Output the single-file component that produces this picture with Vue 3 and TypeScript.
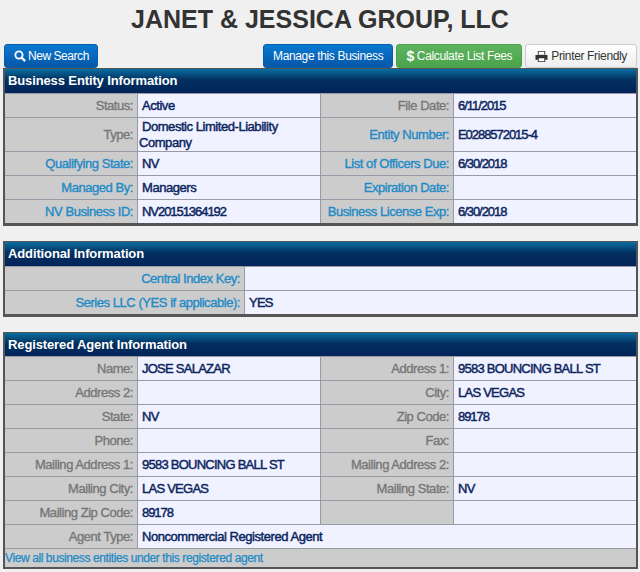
<template>
  <div class="page">
    <h1 class="title">JANET &amp; JESSICA GROUP, LLC</h1>

    <div class="actions">
      <a class="btn blue search">
        <svg class="ico" viewBox="0 0 14 14" width="12" height="12"><circle cx="5.8" cy="5.800" r="4.2" fill="none" stroke="currentColor" stroke-width="2.200" /><path d="M9 9l4 4" stroke="currentColor" stroke-width="2.600" /></svg>
        New Search
      </a>
      <div class="spacer"></div>
      <a class="btn blue">Manage this Business</a>
      <a class="btn green"><span class="dollar">$</span> Calculate List Fees</a>
      <a class="btn white">
        <svg class="ico" viewBox="0 0 14 14" width="13" height="13"><path d="M3 1h8v4H3zM0.500 5.500h13v5H11V13H3v-2.500H0.500z" fill="currentColor" /><path d="M4 2h6v3H4zM4 9h6v3H4z" fill="#fff" /></svg>
        Printer Friendly
      </a>
    </div>

    <section v-for="p in panels" :key="p.title" class="panel" :class="p.cls">
      <div class="panel-head">{{ p.title }}</div>
      <div class="grid">
        <template v-for="c in p.cells" :key="c.label">
          <div class="lbl" :class="[{ link: c.link }, c.rowCls]">{{ c.label }}</div>
          <div class="val" :class="[valueClass(c.value), { wide: c.wide, indent: c.indent }, c.rowCls]">{{ c.value }}</div>
        </template>
      </div>
      <div v-if="p.foot" class="foot">{{ p.foot }}</div>
    </section>
  </div>
</template>

<script setup lang="ts">
interface Cell {
  label: string;
  value: string;
  link?: boolean;
  wide?: boolean;
  indent?: boolean;
  rowCls?: string;
}

interface Panel {
  title: string;
  cls: string;
  cells: Cell[];
  foot?: string;
}

// ids and dates sit tighter than names, all caps in between
const valueClass = (value: string) => {
  if (/^[A-Z]*[\d/-]+$/.test(value) || /^[A-Z]+\d/.test(value)) return "numeric";
  if (!/[a-z]/.test(value)) return "caps";
  return "";
};

const panels: Panel[] = [
  {
    title: "Business Entity Information",
    cls: "four",
    cells: [
      { label: "Status:", value: "Active" },
      { label: "File Date:", value: "6/11/2015" },
      { label: "Type:", value: "Domestic Limited-Liability Company", rowCls: "tall", indent: true },
      { label: "Entity Number:", value: "E0288572015-4", link: true, rowCls: "tall" },
      { label: "Qualifying State:", value: "NV", link: true },
      { label: "List of Officers Due:", value: "6/30/2018", link: true },
      { label: "Managed By:", value: "Managers", link: true },
      { label: "Expiration Date:", value: "", link: true },
      { label: "NV Business ID:", value: "NV20151364192", link: true },
      { label: "Business License Exp:", value: "6/30/2018", link: true },
    ],
  },
  {
    title: "Additional Information",
    cls: "two",
    cells: [
      { label: "Central Index Key:", value: "", link: true },
      { label: "Series LLC (YES if applicable):", value: "YES", link: true },
    ],
  },
  {
    title: "Registered Agent Information",
    cls: "four agent",
    cells: [
      { label: "Name:", value: "JOSE SALAZAR" },
      { label: "Address 1:", value: "9583 BOUNCING BALL ST" },
      { label: "Address 2:", value: "" },
      { label: "City:", value: "LAS VEGAS" },
      { label: "State:", value: "NV" },
      { label: "Zip Code:", value: "89178" },
      { label: "Phone:", value: "" },
      { label: "Fax:", value: "" },
      { label: "Mailing Address 1:", value: "9583 BOUNCING BALL ST" },
      { label: "Mailing Address 2:", value: "" },
      { label: "Mailing City:", value: "LAS VEGAS" },
      { label: "Mailing State:", value: "NV" },
      { label: "Mailing Zip Code:", value: "89178" },
      { label: " ", value: "" },
      { label: "Agent Type:", value: "Noncommercial Registered Agent", wide: true },
    ],
    foot: "View all business entities under this registered agent",
  },
];
</script>

<style>
html,
body {
  margin: 0;
  background: #f0f0f0;
}
</style>

<style scoped>
.page {
  width: 640px;
  height: 572px;
  overflow: hidden;
  box-sizing: border-box;
  padding: 0 3px;
  font-family: "Liberation Sans", Arial, sans-serif;
  background: #f0f0f0;
}

.title {
  margin: 0;
  height: 44px;
  padding-top: 3px;
  box-sizing: border-box;
  font-size: 25px;
  line-height: 32px;
  font-weight: bold;
  text-align: center;
  color: #333;
}

.actions {
  display: flex;
  gap: 3px;
  height: 24px;
  padding-left: 1px;
}

.spacer {
  flex: 1;
}

.btn {
  display: flex;
  align-items: center;
  gap: 3px;
  box-sizing: border-box;
  height: 24px;
  padding: 0 9px;
  border-radius: 3px;
  font-size: 12px;
  letter-spacing: -0.35px;
  color: #fff;
}

.search {
  gap: 2px;
  letter-spacing: -0.45px;
  padding-right: 8px;
}

.ico {
  flex: none;
}

.blue {
  background: linear-gradient(#0a7ad0, #0556a8);
  border: 1px solid #0a5cab;
}

.green {
  background: linear-gradient(#5fb45f, #4aa34a);
  border: 1px solid #4a9f4a;
}

.white {
  background: linear-gradient(#fff, #eee);
  border: 1px solid #ccc;
  color: #333;
}

.dollar {
  font-weight: bold;
  font-size: 14px;
}

.panel {
  border: 2px solid #555;
  border-top-width: 1px;
  border-bottom-width: 3px;
  background: #fff;
  margin-bottom: 15px;
  margin-right: -1px;
}

.panel.agent {
  border-bottom-width: 2px;
}

.panel-head {
  height: 24px;
  line-height: 23px;
  padding-left: 3px;
  font-size: 13px;
  letter-spacing: -0.12px;
  font-weight: bold;
  color: #fff;
  background: linear-gradient(#086ea0, #03305f 45%, #02245a);
}

.agent .panel-head {
  height: 23px;
}

.grid {
  display: grid;
  background: #9a9aa6;
  gap: 1px;
  padding-top: 1px;
}

.four .grid {
  grid-template-columns: 132px 182px 132px 1fr;
}

.two .grid {
  grid-template-columns: 239px 1fr;
}

.lbl,
.val {
  display: flex;
  align-items: center;
  min-height: 23px;
  box-sizing: border-box;
  font-size: 13px;
  letter-spacing: -0.45px;
  line-height: 16px;
}

.lbl {
  justify-content: flex-end;
  padding-right: 4px;
  background: #ccc;
  color: #777;
  -webkit-text-stroke: 0.35px currentColor;
}

.lbl.link {
  color: #1e8ac6;
}

.val {
  padding-left: 4px;
  background: #f1f2ff;
  color: #0b2560;
  -webkit-text-stroke: 0.45px currentColor;
}

.val.caps {
  letter-spacing: -0.75px;
}

.val.numeric {
  letter-spacing: -1.05px;
}

.indent {
  padding-left: 1px;
  text-indent: 3px;
}

.tall {
  min-height: 33px;
}

.wide {
  grid-column: span 3;
}

.foot {
  height: 18px;
  line-height: 18px;
  border-top: 1px solid #9a9aa6;
  background: #ccc;
  color: #1e8ac6;
  font-size: 12px;
  letter-spacing: -0.4px;
  -webkit-text-stroke: 0.25px currentColor;
}
</style>
